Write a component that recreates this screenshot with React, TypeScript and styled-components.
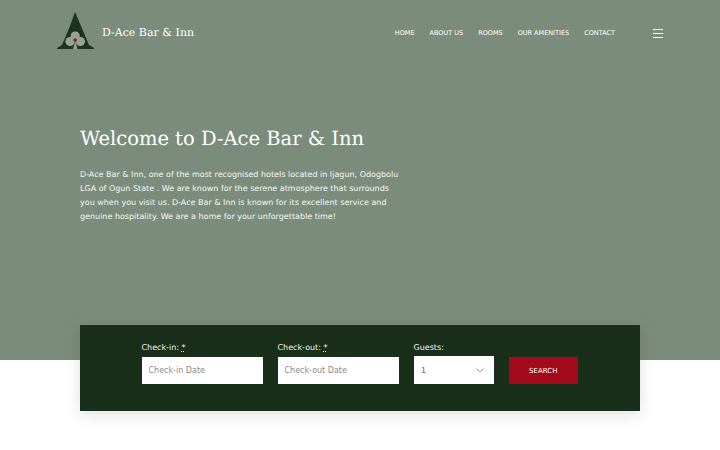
import React from "react";
import styled, { createGlobalStyle } from "styled-components";

const GlobalStyle = createGlobalStyle`
  html, body {
    margin: 0;
    padding: 0;
    background: #ffffff;
    font-family: "DejaVu Sans", sans-serif;
    text-rendering: geometricPrecision;
    overflow: hidden;
  }
  * {
    box-sizing: border-box;
  }
`;

const Logo = () => (
  <svg width="38" height="38" viewBox="0 0 38 38">
    <path d="M18 0 L24 14 L32 33 L37 36 L37 37 L0 37 L0 36 L5 33 L13 14 Z" fill="#1c3320" />
    <g fill="#95a395">
      <circle cx="18.2" cy="24" r="4.6" />
      <circle cx="13" cy="29.5" r="4.6" />
      <circle cx="23.4" cy="29.5" r="4.6" />
    </g>
    <path d="M18.2 29 L20.5 37 L16 37 Z" fill="#95a395" />
    <circle cx="18.2" cy="28" r="1.8" fill="#a3112a" />
  </svg>
);

const NAV_ITEMS = ["HOME", "ABOUT US", "ROOMS", "OUR AMENITIES", "CONTACT"];

const App: React.FC = () => {
  return (
    <Page>
      <GlobalStyle />
      <Hero>
        <Header>
          <Brand>
            <Logo />
            <BrandName>D-Ace Bar &amp; Inn</BrandName>
          </Brand>
          <Nav>
            {NAV_ITEMS.map((item) => (
              <NavLink key={item}>{item}</NavLink>
            ))}
          </Nav>
          <Burger aria-label="menu">
            <span />
            <span />
            <span />
          </Burger>
        </Header>
        <Intro>
          <Title>Welcome to D-Ace Bar &amp; Inn</Title>
          <Description>
            D-Ace Bar &amp; Inn, one of the most recognised hotels located in Ijagun, Odogbolu
            LGA of Ogun State . We are known for the serene atmosphere that surrounds
            you when you visit us. D-Ace Bar &amp; Inn is known for its excellent service and
            genuine hospitality. We are a home for your unforgettable time!
          </Description>
        </Intro>
      </Hero>
      <SearchCard>
        <Field $width={121}>
          <Label>
            Check-in: <Required>*</Required>
          </Label>
          <TextInput placeholder="Check-in Date" readOnly />
        </Field>
        <Field $width={121}>
          <Label>
            Check-out: <Required>*</Required>
          </Label>
          <TextInput placeholder="Check-out Date" readOnly />
        </Field>
        <Field $width={80}>
          <Label>Guests:</Label>
          <SelectBox>
            1
            <svg width="8" height="5" viewBox="0 0 8 5" fill="none">
              <path d="M0.7 0.7 L4 4 L7.3 0.7" stroke="#9a9a9a" strokeWidth="1" />
            </svg>
          </SelectBox>
        </Field>
        <SearchButton>SEARCH</SearchButton>
      </SearchCard>
    </Page>
  );
};

export default App;

const Page = styled.div`
  width: 720px;
  height: 450px;
  overflow: hidden;
`;

const Hero = styled.section`
  height: 360px;
  background: #7c8c7c;
  color: #ffffff;
`;

const Header = styled.header`
  height: 64px;
  padding: 12px 57px 0;
  display: flex;
  align-items: flex-start;
`;

const Brand = styled.div`
  display: flex;
  align-items: center;
  gap: 7px;
  height: 38px;
`;

const BrandName = styled.span`
  font-family: "DejaVu Serif", serif;
  font-size: 11px;
  margin-top: 2px;
`;

const Nav = styled.nav`
  margin-left: auto;
  height: 42px;
  display: flex;
  align-items: center;
  gap: 15px;
`;

const NavLink = styled.a`
  font-size: 6.5px;
  color: #ffffff;
  white-space: nowrap;
`;

const Burger = styled.div`
  margin-left: 38px;
  width: 10px;
  height: 42px;
  display: flex;
  flex-direction: column;
  justify-content: center;
  gap: 3px;
  flex: none;

  span {
    height: 1px;
    background: #ffffff;
  }
`;

const Intro = styled.div`
  padding: 62px 0 0 80px;
`;

const Title = styled.h1`
  margin: 0 0 16px;
  font-family: "DejaVu Serif", serif;
  font-size: 19.5px;
  font-weight: 400;
  line-height: 26px;
  white-space: nowrap;
`;

const Description = styled.p`
  margin: 0;
  width: 320px;
  font-size: 8px;
  line-height: 14px;
  color: #f4f6f4;
`;

const SearchCard = styled.form`
  position: relative;
  width: 560px;
  height: 86px;
  margin: -35px 0 0 80px;
  padding: 16px 0 0 61.5px;
  background: #1a2f1a;
  box-shadow: 0 4px 16px rgba(0, 0, 0, 0.12);
  display: flex;
  align-items: flex-start;
  gap: 15px;
`;

const Field = styled.div<{ $width: number }>`
  width: ${(props) => props.$width}px;
  display: flex;
  flex-direction: column;
`;

const Label = styled.label`
  height: 16px;
  font-size: 8px;
  line-height: 14px;
  color: #f1f1f1;
`;

const Required = styled.abbr`
  text-decoration: underline dotted;
`;

const TextInput = styled.input`
  width: 100%;
  height: 27px;
  border: none;
  outline: none;
  padding: 0 7px;
  background: #ffffff;
  font-family: inherit;
  font-size: 8px;

  &::placeholder {
    color: #8a8a8a;
    opacity: 1;
  }
`;

const SelectBox = styled.div`
  height: 28px;
  margin-top: -1px;
  padding: 0 10px 0 7.5px;
  background: #ffffff;
  color: #666666;
  font-size: 8px;
  display: flex;
  align-items: center;
  justify-content: space-between;
`;

const SearchButton = styled.button`
  width: 69.5px;
  height: 27px;
  margin-top: 16px;
  border: none;
  padding: 0;
  background: #a30b1c;
  color: #ffffff;
  font-family: inherit;
  font-size: 7px;
`;
